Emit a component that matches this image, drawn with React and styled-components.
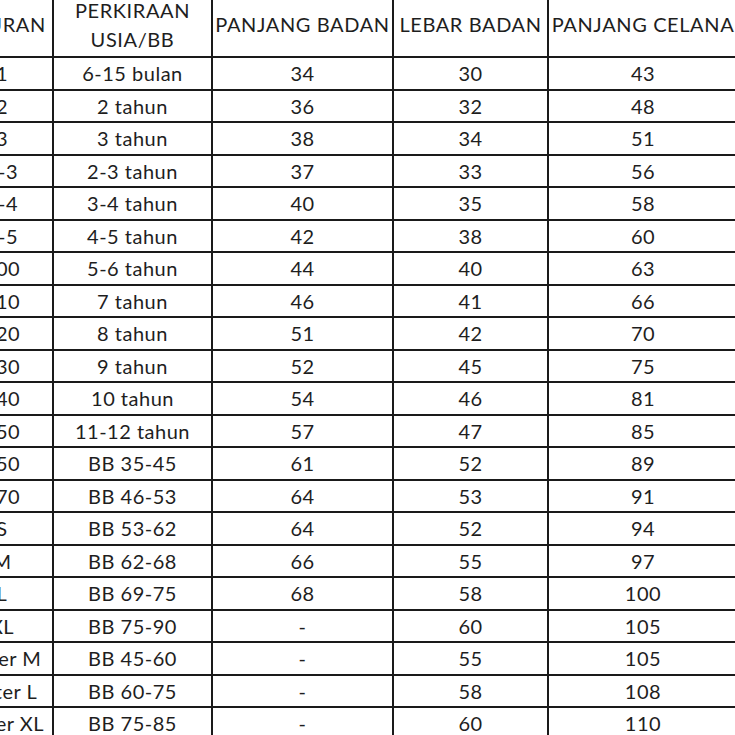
import React from "react";
import styled, { createGlobalStyle } from "styled-components";

const GlobalStyle = createGlobalStyle`
  html, body {
    margin: 0;
    padding: 0;
    background: #ffffff;
    overflow: hidden;
  }
`;

const Page = styled.div`
  width: 735px;
  height: 735px;
  overflow: hidden;
  background: #ffffff;
`;

const SizeTable = styled.div`
  display: grid;
  grid-template-columns: 100px 157px 179px 153px 188px;
  grid-template-rows: 63px;
  grid-auto-rows: 30.5px;
  gap: 2px;
  width: max-content;
  margin: -9px 0 0 -50px;
  background: #1a1a1a;
  border: 2px solid #1a1a1a;
  font-family: Lato, "Open Sans", sans-serif;
  font-size: 20px;
  letter-spacing: 0.5px;
  color: #1e1e1e;
`;

const Cell = styled.div`
  background: #ffffff;
  display: flex;
  align-items: center;
  justify-content: center;
  text-align: center;
  white-space: nowrap;
  line-height: 29px;
  padding-top: ${(p) => (p.$head ? "0" : "1px")};
  letter-spacing: ${(p) => (p.$head ? "0.6px" : "inherit")};
`;

const rows = [
  ["1", "6-15 bulan", "34", "30", "43"],
  ["2", "2 tahun", "36", "32", "48"],
  ["3", "3 tahun", "38", "34", "51"],
  ["2-3", "2-3 tahun", "37", "33", "56"],
  ["3-4", "3-4 tahun", "40", "35", "58"],
  ["4-5", "4-5 tahun", "42", "38", "60"],
  ["100", "5-6 tahun", "44", "40", "63"],
  ["110", "7 tahun", "46", "41", "66"],
  ["120", "8 tahun", "51", "42", "70"],
  ["130", "9 tahun", "52", "45", "75"],
  ["140", "10 tahun", "54", "46", "81"],
  ["150", "11-12 tahun", "57", "47", "85"],
  ["150", "BB 35-45", "61", "52", "89"],
  ["170", "BB 46-53", "64", "53", "91"],
  ["S", "BB 53-62", "64", "52", "94"],
  ["M", "BB 62-68", "66", "55", "97"],
  ["L", "BB 69-75", "68", "58", "100"],
  ["XL", "BB 75-90", "-", "60", "105"],
  ["Outer M", "BB 45-60", "-", "55", "105"],
  ["Outer L", "BB 60-75", "-", "58", "108"],
  ["Outer XL", "BB 75-85", "-", "60", "110"],
];

export default function App() {
  return (
    <Page>
      <GlobalStyle />
      <SizeTable>
        <Cell $head>UKURAN</Cell>
        <Cell $head>
          PERKIRAAN
          <br />
          USIA/BB
        </Cell>
        <Cell $head>PANJANG BADAN</Cell>
        <Cell $head>LEBAR BADAN</Cell>
        <Cell $head>PANJANG CELANA</Cell>
        {rows.map((row, i) =>
          row.map((value, j) => <Cell key={i + "-" + j}>{value}</Cell>)
        )}
      </SizeTable>
    </Page>
  );
}
